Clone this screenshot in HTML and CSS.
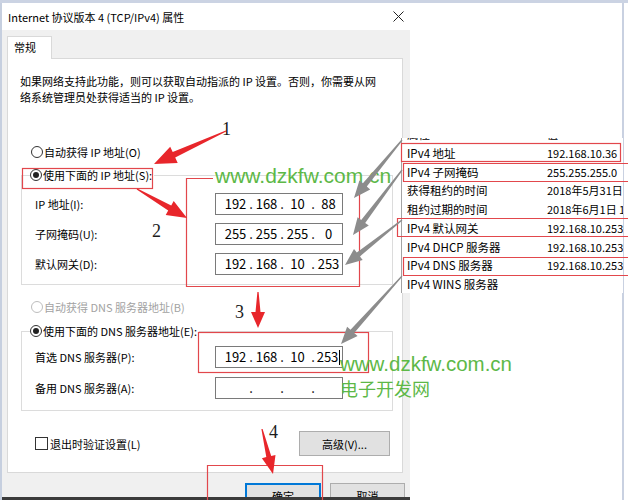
FILE: index.html
```html
<!DOCTYPE html>
<html>
<head>
<meta charset="utf-8">
<title>Internet 协议版本 4 (TCP/IPv4) 属性</title>
<link rel="stylesheet" href="styles.css">
</head>
<body>
<div class="screen">
  <div class="topline"></div>
  <div class="stage">
    <div class="dialog">
      <div class="titlebar">
        <span class="title">Internet 协议版本 4 (TCP/IPv4) 属性</span>
        <svg class="close" width="11" height="11" viewBox="0 0 11 11"><path d="M0.5 0.5L10.5 10.5M10.5 0.5L0.5 10.5" stroke="#222" stroke-width="1"/></svg>
      </div>
      <div class="dlg-body">
        <div class="tabs"><div class="tab">常规</div></div>
        <div class="panel">
          <p class="intro">如果网络支持此功能，则可以获取自动指派的 IP 设置。否则，你需要从网<br>络系统管理员处获得适当的 IP 设置。</p>

          <div class="opt opt-ip"><span class="radio"></span>自动获得 IP 地址(O)</div>
          <div class="group group-ip">
            <div class="opt legend"><span class="radio on"></span>使用下面的 IP 地址(S):</div>
            <div class="row">
              <span class="lbl">IP 地址(I):</span>
              <div class="ip"><span class="oct">192</span><span class="sep">.</span><span class="oct">168</span><span class="sep">.</span><span class="oct">10</span><span class="sep">.</span><span class="oct">88</span></div>
            </div>
            <div class="row">
              <span class="lbl">子网掩码(U):</span>
              <div class="ip"><span class="oct">255</span><span class="sep">.</span><span class="oct">255</span><span class="sep">.</span><span class="oct">255</span><span class="sep">.</span><span class="oct">0</span></div>
            </div>
            <div class="row">
              <span class="lbl">默认网关(D):</span>
              <div class="ip"><span class="oct">192</span><span class="sep">.</span><span class="oct">168</span><span class="sep">.</span><span class="oct">10</span><span class="sep">.</span><span class="oct">253</span></div>
            </div>
          </div>

          <div class="opt opt-dns disabled"><span class="radio"></span>自动获得 DNS 服务器地址(B)</div>
          <div class="group group-dns">
            <div class="opt legend"><span class="radio on"></span>使用下面的 DNS 服务器地址(E):</div>
            <div class="row">
              <span class="lbl">首选 DNS 服务器(P):</span>
              <div class="ip"><span class="oct">192</span><span class="sep">.</span><span class="oct">168</span><span class="sep">.</span><span class="oct">10</span><span class="sep">.</span><span class="oct">253<span class="caret"></span></span></div>
            </div>
            <div class="row">
              <span class="lbl">备用 DNS 服务器(A):</span>
              <div class="ip"><span class="oct"></span><span class="sep">.</span><span class="oct"></span><span class="sep">.</span><span class="oct"></span><span class="sep">.</span><span class="oct"></span></div>
            </div>
          </div>

          <div class="foot">
            <label class="check"><span class="box"></span>退出时验证设置(L)</label>
            <button class="btn btn-adv">高级(V)...</button>
          </div>
        </div>
        <div class="actions">
          <button class="btn btn-ok">确定</button>
          <button class="btn btn-cancel">取消</button>
        </div>
      </div>
      <div class="taskbar"></div>
    </div>
    <div class="side"></div>
  </div>

  <!-- pasted ipconfig details -->
  <div class="details">
    <div class="drow head"><span>属性</span><span>值</span></div>
    <div class="drow"><span>IPv4 地址</span><span>192.168.10.36</span></div>
    <div class="drow"><span>IPv4 子网掩码</span><span>255.255.255.0</span></div>
    <div class="drow"><span>获得租约的时间</span><span>2018年5月31日 19:42:11</span></div>
    <div class="drow"><span>租约过期的时间</span><span>2018年6月1日 19:42:11</span></div>
    <div class="drow"><span>IPv4 默认网关</span><span>192.168.10.253</span></div>
    <div class="drow"><span>IPv4 DHCP 服务器</span><span>192.168.10.253</span></div>
    <div class="drow"><span>IPv4 DNS 服务器</span><span>192.168.10.253</span></div>
    <div class="drow"><span>IPv4 WINS 服务器</span><span></span></div>
  </div>

  <div class="wm wm-top">www.dzkfw.com.cn</div>

  <svg class="marks" width="628" height="500" viewBox="0 0 628 500">
    <g class="boxes" fill="none" stroke="#e2474c" stroke-width="1.2">
      <rect x="22.5" y="168.5" width="130" height="20"/>
      <path d="M213 178.5H186.5V286.5H359.5V192"/>
      <rect x="198.5" y="332.5" width="170" height="40"/>
      <path d="M207.5 502V465.5H322.5V502"/>
      <rect x="401.5" y="143.5" width="219" height="18"/>
      <path d="M630 163.5H403.5V181.5H630"/>
      <path d="M630 218.5H397.5V236.5H630"/>
      <path d="M630 257.5H403.5V275.5H630"/>
    </g>
    <g class="arrows"></g>
    <g class="nums">
      <text x="222" y="135">1</text>
      <text x="152" y="237">2</text>
      <text x="235" y="318">3</text>
      <text x="269" y="438">4</text>
    </g>
  </svg>

  <div class="wm wm-bottom">www.dzkfw.com.cn</div>
  <div class="wm wm-cn">电子开发网</div>
</div>

<script>
  "use strict";

  // tail -> tip, head length, head half width, neck half width
  let arrows = [
    { from: [226, 131], to: [154, 164], head: 22, wing: 9, neck: 3, color: "#e8262b" },
    { from: [137, 189], to: [187, 218], head: 20, wing: 8, neck: 3, color: "#e8262b" },
    { from: [258, 292], to: [258, 328], head: 16, wing: 7, neck: 2.5, color: "#e8262b" },
    { from: [262, 429], to: [273, 474], head: 18, wing: 7, neck: 2.5, color: "#e8262b" },
    { from: [402, 140], to: [354, 198], head: 17, wing: 7, neck: 2.5, color: "#8c8c8c" },
    { from: [402, 170], to: [353, 235], head: 17, wing: 7, neck: 2.5, color: "#8c8c8c" },
    { from: [402, 220], to: [345, 265], head: 17, wing: 7, neck: 2.5, color: "#8c8c8c" },
    { from: [402, 276], to: [341, 344], head: 17, wing: 7, neck: 2.5, color: "#8c8c8c" }
  ];

  let layer = document.querySelector(".marks .arrows");

  arrows.forEach(function (a) {
    let dx = a.to[0] - a.from[0];
    let dy = a.to[1] - a.from[1];
    let len = Math.sqrt(dx * dx + dy * dy);
    let ux = dx / len, uy = dy / len;
    let nx = -uy, ny = ux;
    let bx = a.to[0] - ux * a.head;
    let by = a.to[1] - uy * a.head;
    let tail = 0.6;

    let pts = [
      [a.from[0] + nx * tail, a.from[1] + ny * tail],
      [bx + nx * a.neck, by + ny * a.neck],
      [bx + nx * a.wing, by + ny * a.wing],
      a.to,
      [bx - nx * a.wing, by - ny * a.wing],
      [bx - nx * a.neck, by - ny * a.neck],
      [a.from[0] - nx * tail, a.from[1] - ny * tail]
    ];

    let poly = document.createElementNS("http://www.w3.org/2000/svg", "polygon");
    poly.setAttribute("points", pts.map(p => p[0].toFixed(1) + "," + p[1].toFixed(1)).join(" "));
    poly.setAttribute("fill", a.color);
    layer.appendChild(poly);
  });
</script>
</body>
</html>
```

FILE: styles.css
```css
*, *:before, *:after {
  box-sizing: border-box;
  padding: 0;
  margin: 0;
}

body {
  width: 628px;
  height: 500px;
  overflow: hidden;
  background: #fff;
  color: #000;
  font-family: "Noto Sans CJK SC", sans-serif;
  font-size: 11px;
}

.screen {
  position: relative;
  width: 628px;
  height: 500px;
}

.topline {
  height: 3px;
  background: #cbd3e3;
}

.stage {
  display: flex;
  height: 497px;
}

/* ---- dialog ---- */

.dialog {
  width: 410px;
  display: flex;
  flex-direction: column;
  border-left: 2px solid #c6cfdf;
}

.titlebar {
  height: 27px;
  display: flex;
  align-items: center;
  justify-content: space-between;
  padding: 0 6px 0 6px;
  background: #fff;
  font-size: 11px;
}

.close {
  display: block;
}

.dlg-body {
  flex: 1;
  overflow: hidden;
  padding-left: 5px;
  background: #f0f0f0;
}

.taskbar {
  height: 3px;
  background: #3b3b3b;
}

.tabs {
  display: flex;
  margin-top: 6px;
}

.tab {
  position: relative;
  z-index: 1;
  width: 45px;
  height: 23px;
  margin-bottom: -1px;
  padding-left: 6px;
  border: 1px solid #d9d9d9;
  border-bottom: none;
  background: #fff;
  line-height: 21px;
}

.panel {
  width: 396px;
  height: 415px;
  padding-top: 14px;
  border: 1px solid #d9d9d9;
  background: #fff;
}

.intro {
  margin-left: 12px;
  line-height: 16px;
}

.opt {
  display: flex;
  align-items: center;
  height: 16px;
  margin-left: 23px;
  line-height: 16px;
}

.opt-ip {
  margin-top: 39px;
}

.opt-dns {
  margin-top: 14px;
}

.opt.disabled {
  color: #a2a2a2;
}

.radio {
  width: 12px;
  height: 12px;
  margin-right: 1px;
  border: 1px solid #333;
  border-radius: 50%;
  background: #fff;
  display: flex;
  align-items: center;
  justify-content: center;
}

.radio.on:after {
  content: '';
  width: 6px;
  height: 6px;
  border-radius: 50%;
  background: #222;
}

.disabled .radio {
  border-color: #bdbdbd;
}

.group {
  width: 372px;
  margin-left: 13px;
  border: 1px solid #dcdcdc;
}

.group-ip {
  margin-top: 15px;
  padding-bottom: 9px;
}

.group-dns {
  margin-top: 16px;
  padding-bottom: 11px;
}

.legend {
  width: max-content;
  margin-top: -9px;
  margin-left: 8px;
  padding-right: 2px;
  background: #fff;
}

.row {
  display: flex;
  align-items: center;
  height: 22px;
  margin-left: 13px;
}

.group-ip .legend + .row {
  margin-top: 10px;
}

.group-ip .row + .row {
  margin-top: 8px;
}

.group-dns .legend + .row {
  margin-top: 7px;
}

.group-dns .row + .row {
  margin-top: 9px;
}

.lbl {
  width: 180px;
}

.ip {
  display: flex;
  align-items: center;
  width: 128px;
  height: 22px;
  padding-left: 6px;
  border: 1px solid #7a7a7a;
  background: #fff;
  font-size: 13px;
  line-height: 20px;
}

.oct {
  width: 27px;
  text-align: center;
}

.sep {
  width: 4px;
  text-align: center;
}

.caret {
  display: inline-block;
  width: 1px;
  height: 15px;
  margin-left: 1px;
  vertical-align: -3px;
  background: #000;
}

.foot {
  display: flex;
  align-items: center;
  justify-content: space-between;
  margin: 20px 12px 0 27px;
}

.check {
  display: flex;
  align-items: center;
}

.box {
  width: 13px;
  height: 13px;
  margin-right: 2px;
  border: 1px solid #333;
  background: #fff;
}

.btn {
  height: 25px;
  border: 1px solid #adadad;
  background: #e1e1e1;
  color: #000;
  font-family: "Noto Sans CJK SC", sans-serif;
  font-size: 11px;
}

.btn-adv {
  width: 91px;
}

.actions {
  display: flex;
  justify-content: flex-end;
  gap: 9px;
  margin-top: 10px;
  padding-right: 5px;
}

.btn-ok {
  width: 76px;
  border: 2px solid #0078d7;
}

.btn-cancel {
  width: 75px;
}

.side {
  flex: 1;
  margin-right: 4px;
  border-right: 2px solid #c9d1e1;
  background: #fff;
}

/* ---- pasted details panel ---- */

.details {
  position: absolute;
  left: 401px;
  top: 138px;
  width: 222px;
  height: 155px;
  overflow: hidden;
  border-left: 1px solid #a3a3a3;
  background: #fff;
  font-size: 11.5px;
}

.drow {
  display: grid;
  grid-template-columns: 140px 1fr;
  height: 18.75px;
  padding-left: 5px;
  line-height: 18.75px;
  white-space: nowrap;
}

.drow span + span {
  font-size: 11px;
}

.drow.head {
  margin-top: -13px;
}

/* ---- annotations ---- */

.marks {
  position: absolute;
  left: 0;
  top: 0;
}

.nums text {
  font-family: "Liberation Serif", serif;
  font-size: 18px;
  fill: #1c1c1c;
}

.wm {
  position: absolute;
  color: #5db847;
  white-space: nowrap;
}

.wm-top, .wm-bottom {
  font-family: "Liberation Sans", sans-serif;
  line-height: 21px;
}

.wm-top {
  left: 215px;
  top: 165px;
  font-size: 21px;
}

.wm-bottom {
  left: 340px;
  top: 353px;
  font-size: 20.5px;
}

.wm-cn {
  left: 340px;
  top: 378px;
  font-size: 18px;
  line-height: 20px;
}
```
